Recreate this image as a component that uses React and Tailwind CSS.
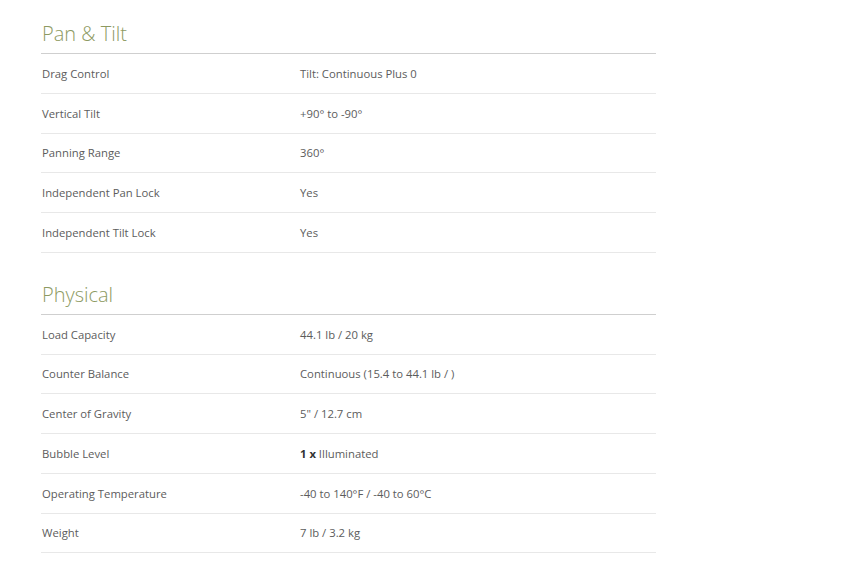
export default function App() {
  const sections = [
    {
      title: "Pan & Tilt",
      rows: [
        ["Drag Control", "Tilt: Continuous Plus 0"],
        ["Vertical Tilt", "+90° to -90°"],
        ["Panning Range", "360°"],
        ["Independent Pan Lock", "Yes"],
        ["Independent Tilt Lock", "Yes"],
      ],
    },
    {
      title: "Physical",
      rows: [
        ["Load Capacity", "44.1 lb / 20 kg"],
        ["Counter Balance", "Continuous (15.4 to 44.1 lb / )"],
        ["Center of Gravity", "5\" / 12.7 cm"],
        ["Bubble Level", <><span className="font-bold text-[#333]">1 x</span> Illuminated</>],
        ["Operating Temperature", "-40 to 140°F / -40 to 60°C"],
        ["Weight", "7 lb / 3.2 kg"],
      ],
    },
  ];
  return (
    <div className="w-[851px] h-[572px] bg-white overflow-hidden" style={{ fontFamily: '"Open Sans", sans-serif' }}>
      <div className="ml-[41px] w-[615px]">
        {sections.map((s, i) => (
          <div key={i} className={i > 0 ? "mt-[8px]" : ""}>
            <div className="pt-[20px] pb-[5px] border-b border-[#cfcfcf]">
              <h2 className="text-[20px] leading-[28px] font-light text-[#8d9a62] pl-[1px]">{s.title}</h2>
            </div>
            {s.rows.map((r, j) => (
              <div key={j} className="flex items-center pt-[2px] h-[39.75px] border-b border-[#e8e8e8] text-[11.3px] text-[#5c5c5c]">
                <div className="w-[259px] pl-[1px]">{r[0]}</div>
                <div className="flex-1">{r[1]}</div>
              </div>
            ))}
          </div>
        ))}
      </div>
    </div>
  );
}
